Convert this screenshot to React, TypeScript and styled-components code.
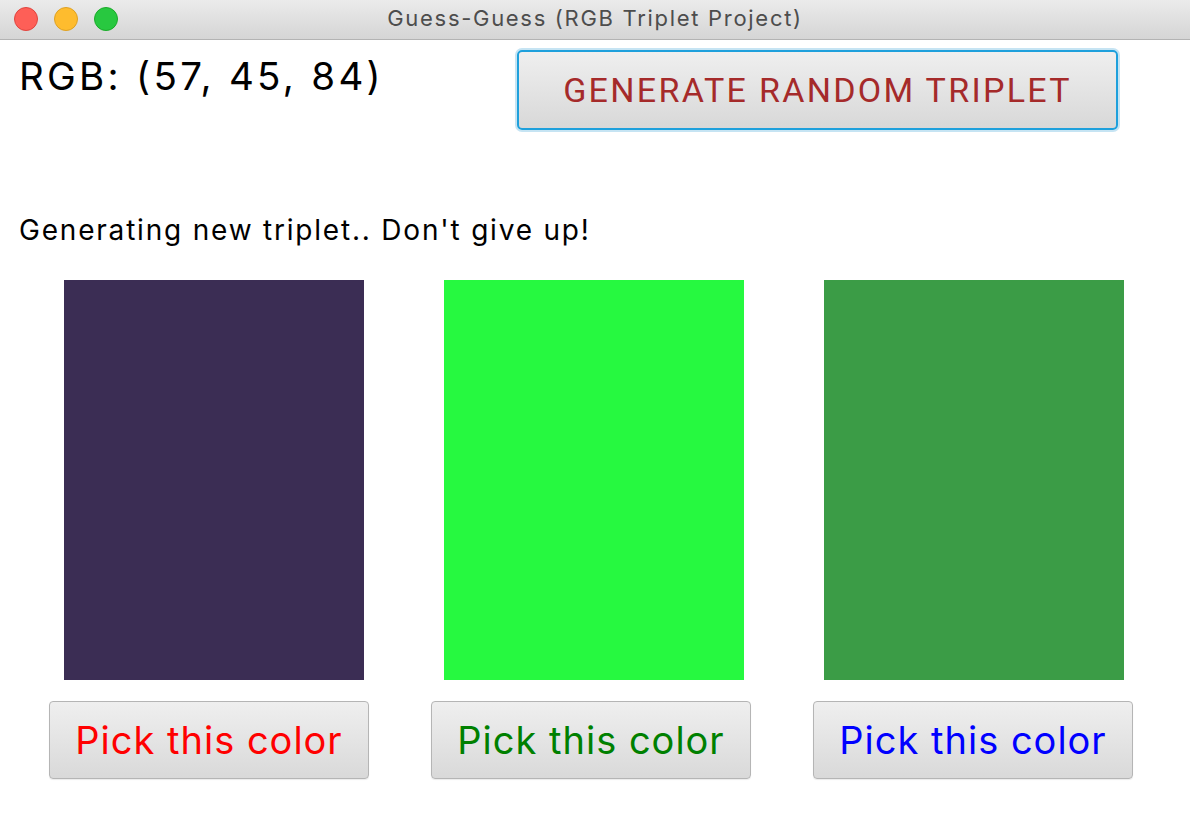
import React from "react";
import styled, { createGlobalStyle } from "styled-components";

const Global = createGlobalStyle`
  html, body { margin: 0; padding: 0; background: #ffffff; }
  body { font-family: Inter, "Noto Sans", sans-serif; width: 1190px; height: 836px; overflow: hidden; }
`;

const Window = styled.div`
  width: 1190px;
  height: 836px;
  display: flex;
  flex-direction: column;
  background: #ffffff;
`;

const TitleBar = styled.div`
  height: 39px;
  flex: none;
  display: flex;
  align-items: center;
  position: relative;
  background: linear-gradient(#ebebeb, #d5d5d5);
  border-bottom: 1px solid #b3b3b3;
`;

const Lights = styled.div`
  display: flex;
  gap: 16px;
  padding-left: 14px;
  margin-top: -2px;
`;

const Light = styled.span<{ $fill: string; $edge: string }>`
  width: 22px;
  height: 22px;
  border-radius: 50%;
  background: ${(p) => p.$fill};
  border: 1px solid ${(p) => p.$edge};
`;

const Title = styled.div`
  position: absolute;
  left: 0;
  right: 0;
  top: 0;
  height: 36px;
  display: flex;
  align-items: center;
  justify-content: center;
  font-size: 22px;
  letter-spacing: 1.7px;
  color: #4d4d4d;
  pointer-events: none;
`;

const Content = styled.div`
  display: flex;
  flex-direction: column;
  padding: 10px 0 0 19px;
`;

const TopRow = styled.div`
  display: flex;
  align-items: flex-start;
  padding-right: 72px;
`;

const RgbLabel = styled.div`
  font-size: 38.5px;
  line-height: 44px;
  letter-spacing: 3.3px;
  margin-top: 4px;
  color: #000;
`;

const GenerateButton = styled.button`
  margin-left: auto;
  width: 601px;
  height: 80px;
  border: 2px solid #1ea0dc;
  box-shadow: 0 0 0 2px #c6e4f3;
  border-radius: 5px;
  background: linear-gradient(#efefef, #d8d8d8);
  color: #a52a2a;
  font-family: Roboto, "Noto Sans", sans-serif;
  font-size: 34px;
  letter-spacing: 2.3px;
  padding: 0;
`;

const Status = styled.div`
  margin-top: 83px;
  font-size: 28px;
  line-height: 34px;
  letter-spacing: 1.8px;
  color: #000;
`;

const Columns = styled.div`
  display: flex;
  gap: 62px;
  margin-top: 33px;
  margin-left: 30px;
`;

const Column = styled.div`
  width: 320px;
  display: flex;
  flex-direction: column;
  gap: 21px;
`;

const Swatch = styled.div<{ $color: string; $inset: number }>`
  width: 300px;
  height: 400px;
  margin-left: ${(p) => p.$inset}px;
  background: ${(p) => p.$color};
`;

const PickButton = styled.button<{ $color: string }>`
  width: 320px;
  height: 78px;
  border: 1px solid #b5b5b5;
  border-radius: 4px;
  background: linear-gradient(#efefef, #d9d9d9);
  box-shadow: 0 1px 1px rgba(0, 0, 0, 0.08);
  color: ${(p) => p.$color};
  font-family: Inter, "Noto Sans", sans-serif;
  font-size: 38px;
  letter-spacing: 1px;
  padding: 0;
`;

const swatches = [
  { color: "#3b2d54", text: "#ff0000", inset: 15 },
  { color: "#26f940", text: "#008000", inset: 13 },
  { color: "#3b9c46", text: "#0000ff", inset: 11 },
];

export default function App() {
  return (
    <Window>
      <Global />
      <TitleBar>
        <Lights>
          <Light $fill="#fe5f57" $edge="#e0443e" />
          <Light $fill="#febc2e" $edge="#dea123" />
          <Light $fill="#28c840" $edge="#1aab29" />
        </Lights>
        <Title>Guess-Guess (RGB Triplet Project)</Title>
      </TitleBar>
      <Content>
        <TopRow>
          <RgbLabel>RGB: (57, 45, 84)</RgbLabel>
          <GenerateButton>GENERATE RANDOM TRIPLET</GenerateButton>
        </TopRow>
        <Status>Generating new triplet.. Don't give up!</Status>
        <Columns>
          {swatches.map((s) => (
            <Column key={s.color}>
              <Swatch $color={s.color} $inset={s.inset} />
              <PickButton $color={s.text}>Pick this color</PickButton>
            </Column>
          ))}
        </Columns>
      </Content>
    </Window>
  );
}
